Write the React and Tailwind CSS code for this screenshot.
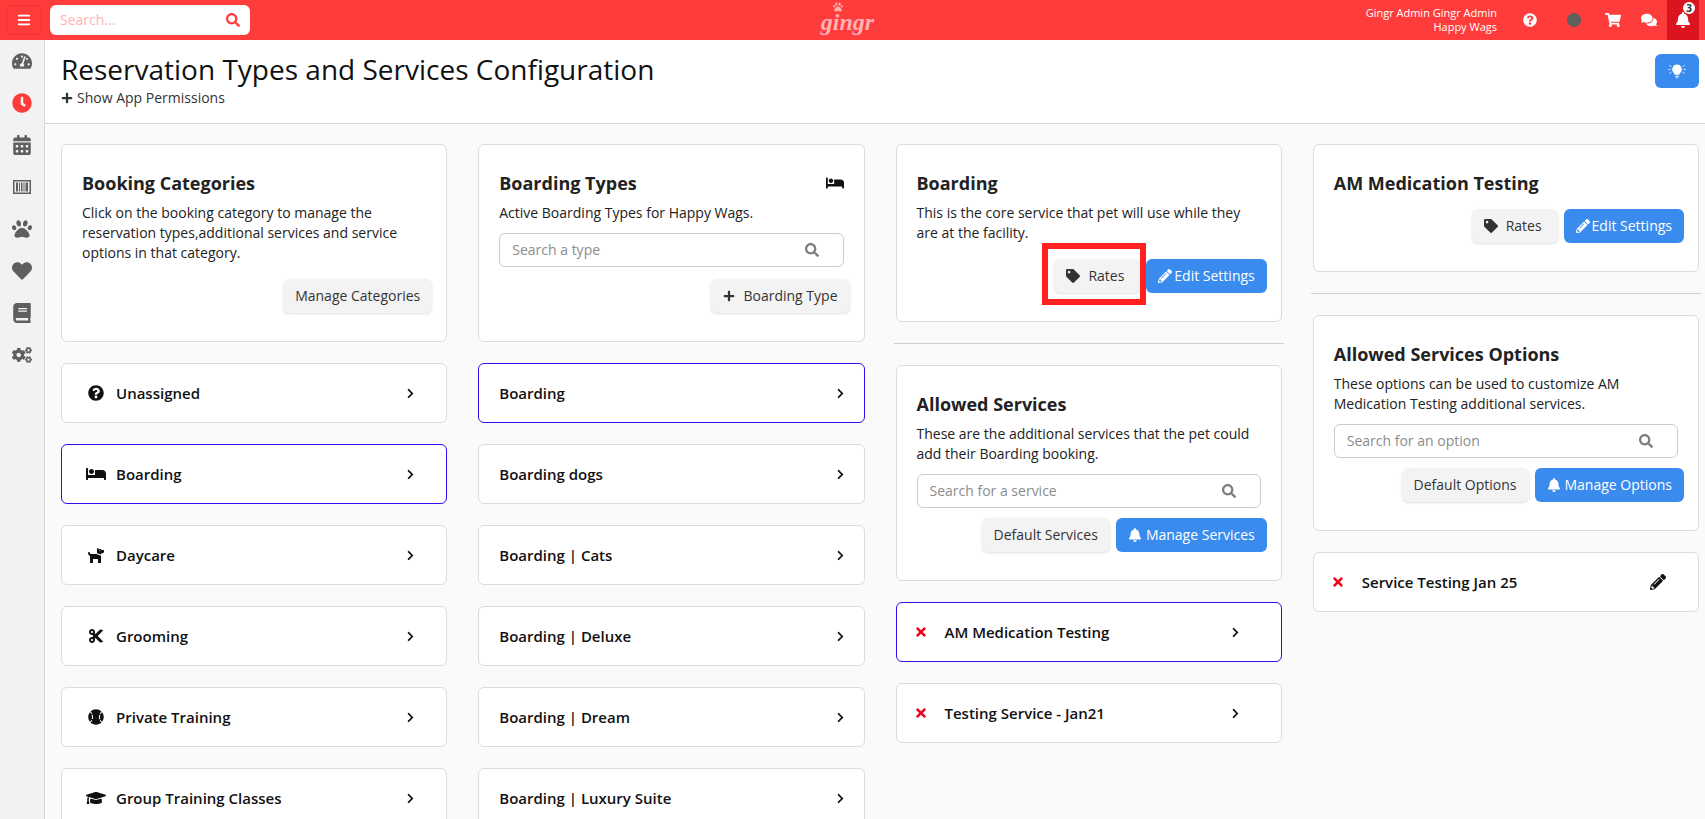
import {
  FaBars, FaBaseballBall, FaBed, FaBell, FaBook, FaCalendarAlt, FaChevronRight, FaClock, FaCogs, FaComments,
  FaCut, FaDog, FaGraduationCap, FaHeart, FaPaw, FaPencilAlt, FaPlus, FaQuestionCircle, FaSearch, FaShoppingCart,
  FaTachometerAlt, FaTag, FaTimes,
} from "react-icons/fa";

function BarcodeBox({ className }) {
  return (
    <svg viewBox="0 0 20 20" className={`size-5 ${className}`} fill="currentColor">
      <path d="M1 3h18v14H1zm1.5 1.5v11h15v-11z" fillRule="evenodd" />
      <path d="M4 5.5h2v9H4zM7 5.5h1v9H7zM9 5.5h1.5v9H9zM11.5 5.5h1v9h-1zM13.5 5.5H16v9h-2.5z" />
    </svg>
  );
}

const SIDE_ICONS = [FaTachometerAlt, FaClock, FaCalendarAlt, BarcodeBox, FaPaw, FaHeart, FaBook, FaCogs];

const CATEGORIES = [
  { name: "Unassigned", icon: FaQuestionCircle },
  { name: "Boarding", icon: FaBed, active: true },
  { name: "Daycare", icon: FaDog },
  { name: "Grooming", icon: FaCut },
  { name: "Private Training", icon: FaBaseballBall },
  { name: "Group Training Classes", icon: FaGraduationCap },
];

const TYPES = ["Boarding dogs", "Boarding | Cats", "Boarding | Deluxe", "Boarding | Dream", "Boarding | Luxury Suite"];

function Card({ title, text, icon: Icon, children }) {
  return (
    <div className="rounded-md border border-[#dcdcdc] bg-white px-5 pt-6 pb-7">
      <div className="flex items-center justify-between">
        <h2 className="text-lg leading-7 font-bold text-[#222]">{title}</h2>
        {Icon && <Icon className="text-lg text-[#111]" />}
      </div>
      {text && <p className="mt-1.5 text-sm leading-5 text-[#222]">{text}</p>}
      {children}
    </div>
  );
}

function SearchBox({ placeholder }) {
  return (
    <div className="mt-2.5 flex h-8.5 items-center rounded-md border border-[#ccc] bg-white pr-6 pl-3">
      <input placeholder={placeholder} className="min-w-0 flex-1 text-sm outline-none placeholder:text-[#8c8c8c]" />
      <FaSearch className="text-sm text-[#7d7d7d]" />
    </div>
  );
}

function Btn({ blue, children }) {
  const color = blue ? "bg-[#3a8bee] text-white" : "bg-[#f3f3f3] text-[#333] shadow-sm";
  return <button className={`flex h-8.5 items-center gap-1 rounded-md px-3 text-sm ${color}`}>{children}</button>;
}

function Btns({ children, top = "mt-4" }) {
  return <div className={`-mr-1.5 flex justify-end gap-1.5 ${top}`}>{children}</div>;
}

function Row({ name, icon: Icon, active, remove, action: Action = FaChevronRight, end = "pr-7.5" }) {
  const border = active ? "border-[#2a10f0]" : "border-[#dcdcdc]";
  return (
    <div className={`flex h-15 shrink-0 items-center rounded-md border bg-white text-[15px] font-semibold text-[#111] ${end} ${border} ${remove ? "pl-4" : Icon ? "pl-6" : "pl-5"}`}>
      {remove && <FaTimes className="mr-4 w-4 text-sm text-[#f0001c]" />}
      {Icon && <Icon className="mr-2.5 w-5 text-base" />}
      <span className="flex-1">{name}</span>
      <Action className={Action === FaChevronRight ? "text-[11px]" : "text-base"} />
    </div>
  );
}

function Divider() {
  return <div className="-mx-0.5 border-t border-[#cfcfcf]" />;
}

function Bulb() {
  return (
    <svg viewBox="0 0 24 20" className="h-4 w-5" fill="currentColor">
      <path d="M12 2a6 6 0 0 0-4 10.4c.8.8 1.2 1.5 1.3 2.3h5.4c.1-.8.5-1.5 1.3-2.3A6 6 0 0 0 12 2zM9.7 15.8h4.6v1.4H9.7zM10.5 18h3v1h-3z" />
      <path d="M1 8h3M20 8h3M2.5 3l2.5 1.5M21.5 3 19 4.5M2.5 13 5 11.5M21.5 13 19 11.5" stroke="currentColor" strokeWidth="1" fill="none" />
    </svg>
  );
}

function EditBtn() {
  return <Btn blue><FaPencilAlt className="-mr-0.5" />Edit Settings</Btn>;
}

export default function App() {
  return (
    <div className="flex h-screen flex-col overflow-hidden bg-[#fafafa]" style={{ fontFamily: '"Open Sans", sans-serif' }}>
      <header className="grid h-10 shrink-0 grid-cols-3 items-center bg-[#ff3c3c] pl-1.5 text-white">
        <div className="flex items-center gap-2">
          <button className="flex h-7.5 w-9 items-center justify-center rounded-md border border-[#f03232]">
            <FaBars className="text-sm" />
          </button>
          <div className="flex h-7.5 w-50 items-center rounded-md bg-white px-2.5">
            <input placeholder="Search..." className="min-w-0 flex-1 text-sm outline-none placeholder:text-[#ffb1b1]" />
            <FaSearch className="text-sm text-[#ff3c3c]" />
          </div>
        </div>
        <div className="flex justify-center pr-4">
          <div className="relative pt-1 text-2xl leading-none font-bold text-[#ffb3b3] italic" style={{ fontFamily: '"Liberation Serif", serif' }}>
            gingr
            <FaPaw className="absolute -top-1 left-3 text-[10px]" />
          </div>
        </div>
        <div className="flex items-center justify-end pr-1.5">
          <div className="text-right text-[11px] leading-3.5">
            <div>Gingr Admin Gingr Admin</div>
            <div>Happy Wags</div>
          </div>
          <FaQuestionCircle className="ml-6.5 text-sm" />
          <span className="ml-7.5 size-3.5 rounded-full bg-[#5f5f5f]" />
          <FaShoppingCart className="ml-6 text-base" />
          <FaComments className="ml-5 text-base" />
          <div className="relative ml-2.5 flex h-10 w-8 items-center justify-center bg-[#dc1420]">
            <FaBell className="text-base" />
            <span className="absolute top-0.5 right-1 flex size-3 items-center justify-center rounded-full bg-white text-[10px] font-bold text-[#333]">3</span>
          </div>
        </div>
      </header>

      <div className="flex min-h-0 flex-1">
        <aside className="flex w-[45px] shrink-0 flex-col items-center border-r border-[#d5d5d5] bg-[#f2f2f2]">
          {SIDE_ICONS.map((Icon, i) => (
            <div key={i} className="flex h-10.5 items-center">
              <Icon className={`text-xl ${i === 1 ? "text-[#ff3c3c]" : "text-[#5f5f5f]"}`} />
            </div>
          ))}
        </aside>

        <main className="min-w-0 flex-1">
          <div className="flex h-21 justify-between border-b border-[#d5d5d5] bg-white pt-3 pr-1.5 pl-4">
            <div>
              <h1 className="text-[28px] leading-8.5 text-[#111]">Reservation Types and Services Configuration</h1>
              <div className="mt-0.5 flex items-center gap-1 text-sm leading-5 text-[#333]">
                <FaPlus className="text-xs" /> Show App Permissions
              </div>
            </div>
            <button className="mt-0.5 flex h-8.5 w-11 items-center justify-center rounded-md bg-[#3a8bee] text-white">
              <Bulb />
            </button>
          </div>

          <div className="grid grid-cols-4 items-start gap-x-[31px] pt-5 pr-1.5 pl-4">
            <div className="flex flex-col gap-[21px]">
              <Card title="Booking Categories" text="Click on the booking category to manage the reservation types,additional services and service options in that category.">
                <Btns><Btn>Manage Categories</Btn></Btns>
              </Card>
              {CATEGORIES.map((c) => <Row key={c.name} {...c} />)}
            </div>

            <div className="flex flex-col gap-[21px]">
              <Card title="Boarding Types" icon={FaBed} text="Active Boarding Types for Happy Wags.">
                <SearchBox placeholder="Search a type" />
                <Btns top="mt-3"><Btn><FaPlus className="mr-1 text-xs" />Boarding Type</Btn></Btns>
              </Card>
              <Row name="Boarding" active end="pr-4.5" />
              {TYPES.map((t) => <Row key={t} name={t} end="pr-4.5" />)}
            </div>

            <div className="flex flex-col gap-[21px]">
              <Card title="Boarding" text="This is the core service that pet will use while they are at the facility.">
                <Btns>
                  <div className="relative">
                    <Btn><FaTag className="mr-1" /><span className="mr-1">Rates</span></Btn>
                    <div className="absolute -top-4 -right-1.5 -bottom-3 -left-3 border-6 border-[#ff2020]" />
                  </div>
                  <EditBtn />
                </Btns>
              </Card>
              <Divider />
              <Card title="Allowed Services" text="These are the additional services that the pet could add their Boarding booking.">
                <SearchBox placeholder="Search for a service" />
                <Btns top="mt-2.5">
                  <Btn>Default Services</Btn>
                  <Btn blue><FaBell />Manage Services</Btn>
                </Btns>
              </Card>
              <Row name="AM Medication Testing" active remove end="pr-10" />
              <Row name="Testing Service - Jan21" remove end="pr-10" />
            </div>

            <div className="flex flex-col gap-[21px]">
              <Card title="AM Medication Testing">
                <Btns top="mt-3">
                  <Btn><FaTag className="mr-1" /><span className="mr-1">Rates</span></Btn>
                  <EditBtn />
                </Btns>
              </Card>
              <Divider />
              <Card title="Allowed Services Options" text="These options can be used to customize AM Medication Testing additional services.">
                <SearchBox placeholder="Search for an option" />
                <Btns top="mt-2.5">
                  <Btn>Default Options</Btn>
                  <Btn blue><FaBell />Manage Options</Btn>
                </Btns>
              </Card>
              <Row name="Service Testing Jan 25" remove action={FaPencilAlt} end="pr-8" />
            </div>
          </div>
        </main>
      </div>
    </div>
  );
}
